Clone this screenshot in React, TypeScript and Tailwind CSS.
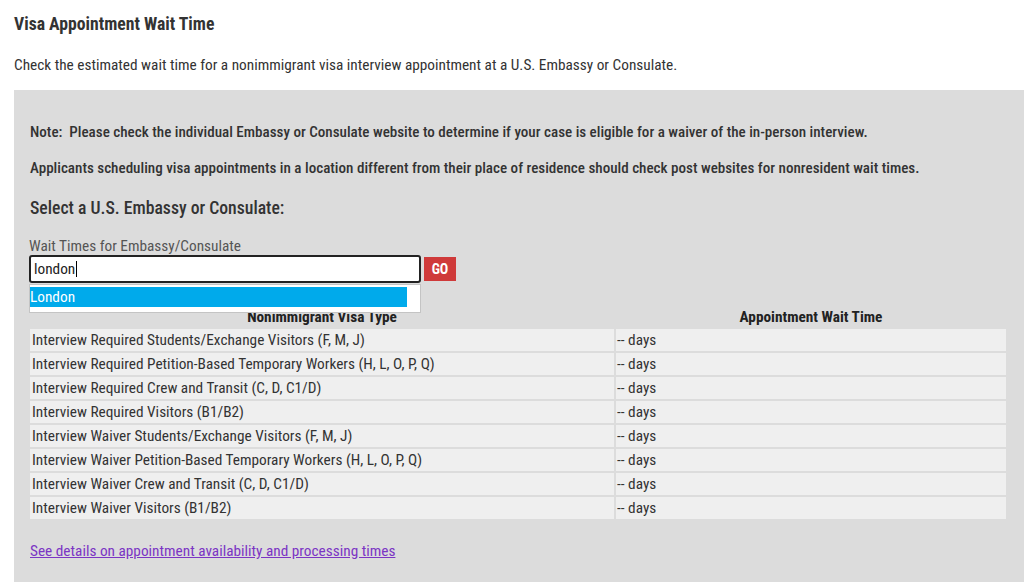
const rows = [
  'Interview Required Students/Exchange Visitors (F, M, J)',
  'Interview Required Petition-Based Temporary Workers (H, L, O, P, Q)',
  'Interview Required Crew and Transit (C, D, C1/D)',
  'Interview Required Visitors (B1/B2)',
  'Interview Waiver Students/Exchange Visitors (F, M, J)',
  'Interview Waiver Petition-Based Temporary Workers (H, L, O, P, Q)',
  'Interview Waiver Crew and Transit (C, D, C1/D)',
  'Interview Waiver Visitors (B1/B2)',
];

export default function App() {
  return (
    <div
      className="min-h-[582px] bg-white pl-[14px] text-[15.3px] text-[#333] [font-stretch:condensed]"
      style={{ fontFamily: 'Roboto, "Liberation Sans", sans-serif' }}
    >
      <h1 className="pt-[13px] text-[17.7px] font-bold leading-[22px]">Visa Appointment Wait Time</h1>
      <p className="mt-[20px] leading-[20px]">
        Check the estimated wait time for a nonimmigrant visa interview appointment at a U.S. Embassy or Consulate.
      </p>

      <div className="mt-[15px] min-h-[493px] bg-[#dcdcdc] pl-[14px] pt-[32px]">
        <p className="px-[2px] text-[15.1px] font-medium leading-[20px]">
          Note:&nbsp; Please check the individual Embassy or Consulate website to determine if your case is eligible for a waiver of the in-person interview.
        </p>
        <p className="mt-[16px] px-[2px] text-[15.1px] font-medium leading-[20px]">
          Applicants scheduling visa appointments in a location different from their place of residence should check post websites for nonresident wait times.
        </p>
        <h2 className="mt-[18px] px-[2px] text-[17.7px] font-medium leading-[24px]">Select a U.S. Embassy or Consulate:</h2>

        <div className="relative mt-[18px] px-[1px]">
          <label className="block leading-[17px] text-[#555]">Wait Times for Embassy/Consulate</label>
          <div className="flex items-center gap-[3px]">
            <div className="flex h-[28px] w-[392px] items-center rounded-[3px] border-2 border-[#222] bg-white px-[3px] text-[#222]">
              london<span className="ml-[1px] h-[16px] w-[1px] bg-black" />
            </div>
            <button className="h-[24px] w-[32px] bg-[#cf3a3a] text-[14px] font-bold text-white">GO</button>
          </div>
          <div className="absolute left-[1px] top-[46px] z-10 h-[29px] w-[392px] border border-[#c4c4c4] bg-white pt-[2px]">
            <div className="h-[20px] w-[377px] bg-[#00aaeb] leading-[20px] text-white">London</div>
          </div>
        </div>

        <table className="mt-[22px] w-[980px] border-separate border-spacing-[2px] leading-[20px]">
          <thead>
            <tr>
              <th className="w-[584px] text-center font-bold text-[#222]">Nonimmigrant Visa Type</th>
              <th className="text-center font-bold text-[#222]">Appointment Wait Time</th>
            </tr>
          </thead>
          <tbody>
            {rows.map((r) => (
              <tr key={r}>
                <td className="h-[22px] bg-[#efefef] px-[2px]">{r}</td>
                <td className="h-[22px] bg-[#efefef] px-[1px]">-- days</td>
              </tr>
            ))}
          </tbody>
        </table>

        <a href="#" className="mt-[19px] inline-block px-[2px] text-[#7b35c4] underline">
          See details on appointment availability and processing times
        </a>
      </div>
    </div>
  );
}
